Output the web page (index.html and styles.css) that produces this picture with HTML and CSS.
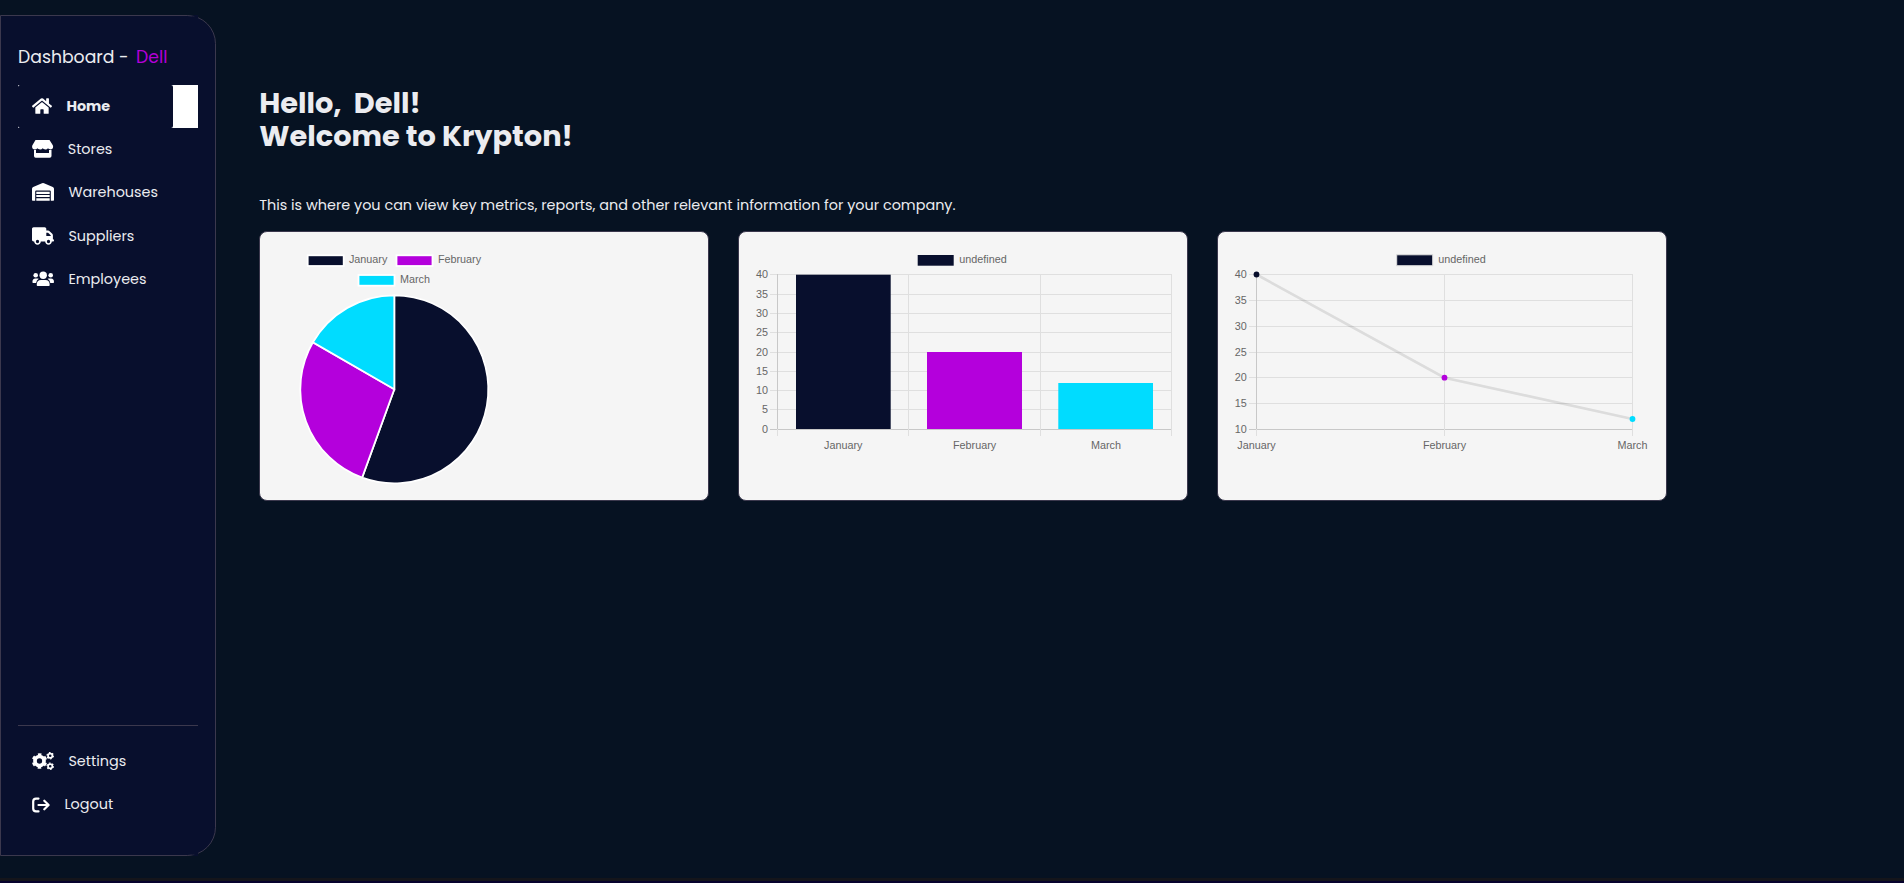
FILE: index.html
```
<!DOCTYPE html>
<html lang="en">
<head>
<meta charset="utf-8">
<title>Krypton Dashboard</title>
<link rel="stylesheet" href="styles.css">
</head>
<body>
<div class="app">
  <aside class="sidebar">
    <div class="brand"><span class="brand-a">Dashboard -</span><span class="brand-b">Dell</span></div>
    <nav class="nav">
      <a class="item active"><span class="pill"><svg class="ic" width="20" height="18" viewBox="0 0 576 512"><path d="M280.400 148.300L96 300.100V464a16 16 0 0 0 16 16l112.100-.300a16 16 0 0 0 15.900-16V368a16 16 0 0 1 16-16h64a16 16 0 0 1 16 16v95.600a16 16 0 0 0 16 16.100L464 480a16 16 0 0 0 16-16V300L295.700 148.300a12.200 12.200 0 0 0-15.300 0zM571.600 251.500L488 182.600V44.100a12 12 0 0 0-12-12h-56a12 12 0 0 0-12 12v72.600L318.500 43a48 48 0 0 0-61 0L4.300 251.500a12 12 0 0 0-1.600 16.900l25.500 31a12 12 0 0 0 16.900 1.600l235.200-193.700a12.200 12.200 0 0 1 15.300 0L530.900 301a12 12 0 0 0 16.900-1.600l25.500-31a12 12 0 0 0-1.700-16.900z"/></svg><span>Home</span></span></a>
      <a class="item"><svg class="ic store" width="22" height="18" viewBox="0 0 22 18"><path d="M3.500 0h14l3.300 5.200c1 2.600-.5 4.300-2.200 4.300-1.100 0-1.900-.5-2.600-1.200-.7.800-1.500 1.200-2.600 1.200-1.200 0-2-.500-2.700-1.200-.7.800-1.500 1.200-2.600 1.200-1.200 0-2-.500-2.700-1.200-.7.800-1.500 1.200-2.600 1.200C.8 9.500-.5 7.600.4 5.200zM2 10h2V13h13V10h2.500v6q0 1.800-1.800 1.800h-14Q2 17.800 2 16z"/></svg><span>Stores</span></a>
      <a class="item"><svg class="ic" width="22" height="18" viewBox="0 0 22 18"><path d="M0 5.800Q0 4.500 1.200 4L10 .3q1-.400 2 0L20.800 4Q22 4.500 22 5.800V17q0 .7-.7.700h-2.500V8.500q0-1-1-1H4.200q-1 0-1 1v9.200H.7Q0 17.700 0 17zM4.300 8.700h13.400v2.200H4.300zM4.300 12h13.400v2.100H4.300zM4.300 15.200h13.400v2.500H4.300z"/></svg><span>Warehouses</span></a>
      <a class="item low"><svg class="ic" width="22" height="18" viewBox="0 0 640 512"><path fill-rule="evenodd" d="M48 0C21.500 0 0 21.500 0 48v320c0 26.500 21.500 48 48 48h16c0 53 43 96 96 96s96-43 96-96h128c0 53 43 96 96 96s96-43 96-96h32c17.700 0 32-14.300 32-32s-14.300-32-32-32V237.300c0-17-6.700-33.300-18.700-45.300L512 114.700c-12-12-28.300-18.700-45.300-18.700H416V48c0-26.500-21.500-48-48-48zM416 160h50.700l77.300 77.300V256H416zM112 416a48 48 0 1 1 96 0 48 48 0 1 1-96 0zm368-48a48 48 0 1 1 0 96 48 48 0 1 1 0-96z"/></svg><span>Suppliers</span></a>
      <a class="item low"><svg class="ic" width="22" height="18" viewBox="0 0 22 18"><circle cx="11.200" cy="5.300" r="3.700"/><circle cx="3.700" cy="5.300" r="2.300"/><circle cx="18.700" cy="5.300" r="2.300"/><path d="M4.700 15q0-5 4.300-5h4.400q4.300 0 4.300 5 0 1-.9 1H5.600q-.9 0-.9-1zM.4 12.200q0-3.700 3-3.700h2.200q.7 0 1.200.3-2.400 1.200-2.700 4.200H1.200q-.8 0-.8-.8zM22 12.200q0-3.700-3-3.700h-2.200q-.7 0-1.200.3 2.400 1.200 2.700 4.200h2.900q.8 0 .8-.8z"/></svg><span>Employees</span></a>
    </nav>
    <nav class="nav foot">
      <a class="item"><svg class="ic" width="22" height="18" viewBox="0 0 22 18"><g fill="none" stroke="#fff"><circle cx="7.500" cy="9" r="4.500" stroke-width="3.700"/><circle cx="7.500" cy="9" r="6.700" stroke-width="2" stroke-dasharray="3.500 3.516" transform="rotate(15 7.500 9)"/><circle cx="18.200" cy="3.700" r="2.150" stroke-width="1.700"/><circle cx="18.200" cy="3.700" r="3.200" stroke-width="1.200" stroke-dasharray="1.650 1.700"/><circle cx="18.200" cy="14.200" r="2.150" stroke-width="1.700"/><circle cx="18.200" cy="14.200" r="3.200" stroke-width="1.200" stroke-dasharray="1.650 1.700"/></g></svg><span>Settings</span></a>
      <a class="item"><svg class="ic" width="18" height="18" viewBox="0 0 18 18"><path d="M6.500 2.600H4Q1.200 2.600 1.200 5.400v7.200q0 2.800 2.800 2.800h2.500M6.500 9h10M12.300 4.700 16.600 9l-4.300 4.300" fill="none" stroke="#fff" stroke-width="2.200" stroke-linecap="round" stroke-linejoin="round"/></svg><span>Logout</span></a>
    </nav>
  </aside>
  <main class="main">
    <h1 class="title">Hello,&nbsp; Dell!<br>Welcome to Krypton!</h1>
    <p class="lead">This is where you can view key metrics, reports, and other relevant information for your company.</p>
    <section class="cards">
      <div class="card"><svg class="chart" width="448" height="268" id="pie"></svg></div>
      <div class="card"><svg class="chart" width="448" height="268" id="bar"></svg></div>
      <div class="card"><svg class="chart" width="448" height="268" id="line"></svg></div>
    </section>
  </main>
</div>
<div class="edge"></div>
<script src="charts.js"></script>
</body>
</html>
```
FILE: styles.css
```
* { box-sizing: border-box; }
body { margin: 0; background: #061222; color: #ebecf0; font-family: Poppins, Inter, "Open Sans", sans-serif; overflow: hidden; height: 883px; display: flex; flex-direction: column; }
.app { display: flex; height: 878px; padding-top: 15px; flex: none; }
.edge { flex: none; height: 5px; background: #07022d; border-top: 3px solid #14151b; }
.sidebar { position: relative; width: 216px; height: 841px; background: #080f2d; border: 1px solid #3b384d; border-radius: 0 28.800px 28.800px 0; padding: 25px 17px 28px; display: flex; flex-direction: column; flex: none; }
/* breaks in the outline where the straight edge meets the corner */
.sidebar::before, .sidebar::after { content: ""; position: absolute; left: 190px; width: 7px; height: 3px; background: linear-gradient(90deg, transparent, #080f2d 4px); }
.sidebar::before { top: -1px; }
.sidebar::after { bottom: -1px; }
.brand { display: flex; height: 32px; line-height: 32px; font-size: 17.280px; margin-bottom: 12px; white-space: nowrap; }
.brand-a { width: 118px; }
.brand-b { color: #b400d8; }
.nav { display: flex; flex-direction: column; }
.foot { margin-top: auto; border-top: 1px solid #3b384d; padding-top: 15px; }
.item { display: flex; align-items: center; height: 43.200px; padding: 0 0 1.500px 14.400px; font-size: 14.400px; white-space: nowrap; }
.low { padding-bottom: 0; }
.ic { fill: #fff; margin-right: 14px; flex: none; }
.store { margin-right: 13.300px; }
.active { background: #fff; padding: 0; font-weight: 700; }
.pill { display: flex; align-items: center; width: 155px; height: 100%; padding: 0 0 1px 14.400px; background: #080f2d; border-radius: 2px; }
.title { margin: 0; font-size: 28.800px; line-height: 33px; font-weight: 700; white-space: nowrap; }
.main { padding: 72px 0 0 43.200px; }
.lead { margin: 39px 0 13px; font-size: 14.400px; line-height: 26px; white-space: nowrap; }
.cards { display: flex; gap: 29px; }
.card { width: 450px; height: 270px; background: #f5f5f5; border: 1px solid #3b384d; border-radius: 8px; flex: none; overflow: hidden; }
.chart { display: block; font: 10.800px "Liberation Sans", Arial, sans-serif; fill: #666; }
```
FILE: charts.js
```
const NAVY = '#080f2d', PURPLE = '#b400dc', CYAN = '#00dcff';
const line = (x1, y1, x2, y2, c) => `<path d="M${x1} ${y1}L${x2} ${y2}" stroke="${c || '#dfdfdf'}" fill="none"/>`;
const text = (x, y, s, a) => `<text x="${x}" y="${y}" text-anchor="${a || 'start'}">${s}</text>`;
const rect = (x, y, w, h, f, s, sw) => `<rect x="${x}" y="${y}" width="${w}" height="${h}" fill="${f}" stroke="${s || 'none'}" stroke-width="${sw || 0}"/>`;
const put = (id, s) => { document.getElementById(id).innerHTML = s; };

function pie() {
  const cx = 134.300, cy = 157.300, r = 94;
  let a = 0, out = '';
  [[40, NAVY], [20, PURPLE], [12, CYAN]].forEach(([v, c]) => {
    const b = a + v / 72 * 2 * Math.PI;
    out += `<path d="M${cx} ${cy}L${cx + r * Math.sin(a)} ${cy - r * Math.cos(a)}A${r} ${r} 0 ${b - a > Math.PI ? 1 : 0} 1 ${cx + r * Math.sin(b)} ${cy - r * Math.cos(b)}Z" fill="${c}" stroke="#fff" stroke-width="1.800"/>`;
    a = b;
  });
  out += rect(47.700, 23.300, 36, 10.700, NAVY, '#fff', 1.800) + text(88.900, 31, 'January');
  out += rect(136.500, 23.300, 36, 10.700, PURPLE, '#fff', 1.800) + text(177.900, 31, 'February');
  out += rect(98.500, 43, 36, 10.700, CYAN, '#fff', 1.800) + text(140, 51, 'March');
  put('pie', out);
}

function bars() {
  let out = rect(178.700, 23, 36, 10.700, NAVY) + text(220.300, 31, 'undefined');
  [42, 62, 81, 100, 120, 139, 158, 177, 197].forEach((y, i) => {
    out += line(31, y + .5, 433, y + .5, i === 8 ? '#c8c8c8' : '') + text(29, y + 3.500, 40 - i * 5, 'end');
  });
  [38, 169, 301, 432].forEach((x, i) => { out += line(x + .5, 42, x + .5, 204) + (i ? '' : line(x + .5, 42, x + .5, 197, '#c8c8c8')); });
  out += rect(57, 42.700, 94.700, 154.300, NAVY) + rect(188, 120, 95, 77, PURPLE) + rect(319.300, 151, 94.700, 46, CYAN);
  ['January', 'February', 'March'].forEach((s, i) => { out += text(104.300 + i * 131.300, 217, s, 'middle'); });
  put('bar', out);
}

function trend() {
  let out = rect(178.700, 22.800, 36, 10.900, NAVY, '#dcdcdc', 1) + text(220.300, 31, 'undefined');
  [42, 68, 94, 120, 145, 171, 197].forEach((y, i) => {
    out += line(31, y + .5, 415, y + .5, i === 6 ? '#c8c8c8' : '') + text(28.800, y + 3.500, 40 - i * 5, 'end');
  });
  [38, 226, 414].forEach((x, i) => { out += line(x + .5, 42, x + .5, 204) + (i ? '' : line(x + .5, 42, x + .5, 197, '#c8c8c8')); });
  out += '<path d="M38.500 42.500L226.500 145.700L414.500 187" fill="none" stroke="#000" stroke-opacity=".1" stroke-width="2.670"/>';
  [[38.500, 42.500, NAVY], [226.500, 145.700, PURPLE], [414.500, 187, CYAN]].forEach(([x, y, c]) => { out += `<circle cx="${x}" cy="${y}" r="2.900" fill="${c}"/>`; });
  ['January', 'February', 'March'].forEach((s, i) => { out += text(38.500 + i * 188, 217, s, 'middle'); });
  put('line', out);
}

pie();
bars();
trend();
```
